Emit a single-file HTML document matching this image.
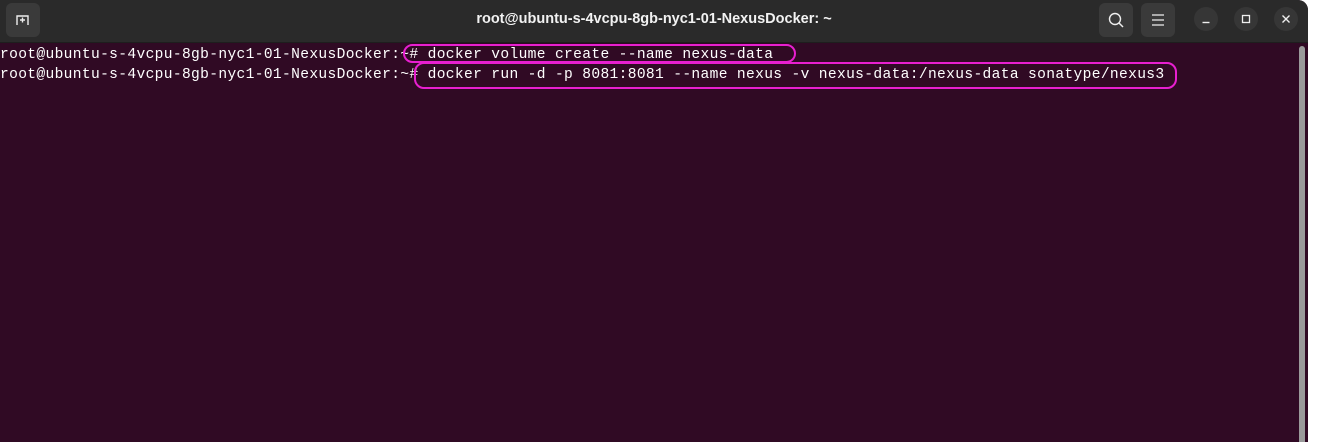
<!DOCTYPE html>
<html><head><style>
body{margin:0;width:1320px;height:442px;background:#fff;overflow:hidden;position:relative;font-family:"Liberation Sans",sans-serif}
.win{position:absolute;left:0;top:0;width:1308px;height:442px;background:#300a24;border-top-right-radius:10px;overflow:hidden}
.hdr{position:absolute;left:0;top:0;width:1308px;height:42px;background:#2a2a2a;border-bottom:1px solid #1e1e1e}
.title{position:absolute;left:0;width:1308px;top:11px;text-align:center;color:#f2f2f2;font-weight:bold;font-size:14.5px}
.btn{position:absolute;top:3px;width:34px;height:34px;background:#3a3a3a;border-radius:6px}
.cb{position:absolute;top:7px;width:24px;height:24px;border-radius:50%;background:#363636}
.term{position:absolute;left:0;top:45px;font-family:"Liberation Mono",monospace;font-size:14.6px;letter-spacing:0.34px;line-height:20px;color:#fff;white-space:pre}
.ov{position:absolute;border:2px solid #e81fd0;border-radius:10px;box-sizing:border-box}
.sb{position:absolute;left:1299px;top:46px;width:6px;height:400px;background:#9a9a9a;border-radius:3px}
</style></head><body>
<div class="win">
<div class="hdr">
<div class="btn" style="left:6px"><svg width="34" height="34"><path d="M11 22V13h11v9M16.5 14.5v5M14 17h5" stroke="#eee" stroke-width="1.4" fill="none"/></svg></div>
<div class="title">root@ubuntu-s-4vcpu-8gb-nyc1-01-NexusDocker: ~</div>
<div class="btn" style="left:1099px"><svg width="34" height="34"><circle cx="16" cy="16" r="5.5" stroke="#eee" stroke-width="1.4" fill="none"/><path d="M20 20l4 4" stroke="#eee" stroke-width="1.5"/></svg></div>
<div class="btn" style="left:1141px"><svg width="34" height="34"><path d="M11 12h12M11 17h12M11 22h12" stroke="#eee" stroke-width="1.3"/></svg></div>
<div class="cb" style="left:1194px"><svg width="24" height="24"><path d="M8.5 15.5h7" stroke="#eee" stroke-width="1.4"/></svg></div>
<div class="cb" style="left:1234px"><svg width="24" height="24"><rect x="8.5" y="8.5" width="7" height="7" stroke="#eee" stroke-width="1.3" fill="none"/></svg></div>
<div class="cb" style="left:1274px"><svg width="24" height="24"><path d="M8.5 8.5l7 7M15.5 8.5l-7 7" stroke="#eee" stroke-width="1.4"/></svg></div>
</div>
<div class="term">root@ubuntu-s-4vcpu-8gb-nyc1-01-NexusDocker:~# docker volume create --name nexus-data
root@ubuntu-s-4vcpu-8gb-nyc1-01-NexusDocker:~# docker run -d -p 8081:8081 --name nexus -v nexus-data:/nexus-data sonatype/nexus3</div>
<div class="ov" style="left:403px;top:44px;width:393px;height:19px"></div>
<div class="ov" style="left:414px;top:62px;width:763px;height:27px"></div>
<div class="sb"></div>
</div>
</body></html>
